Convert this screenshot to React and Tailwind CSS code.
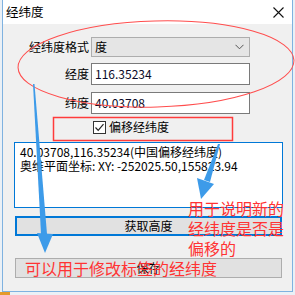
import { useState } from 'react';

const FONT = "font-['Noto_Sans_CJK_SC','Noto_Sans',sans-serif]";

function Field({ label, children }) {
    return (
        <div className="flex items-center">
            <div className="w-[88px] pr-[2px] text-right text-[12px] leading-none text-black">{label}</div>
            {children}
        </div>
    );
}

export default function App() {
    const [offset, setOffset] = useState(true);

    return (
        <div className={`relative w-[295px] h-[295px] overflow-hidden bg-[#eaf0f6] ${FONT}`}>
            {/* Window */}
            <div className="ml-[2px] w-[291px] h-[292px] flex flex-col border-x border-b border-[#7fb2e0] bg-[#f0f0f0]">
                {/* Title bar */}
                <div className="h-[24px] bg-white flex items-center justify-between pl-[3px] pr-[8px]">
                    <span className="text-[12.5px] leading-none text-black">经纬度</span>
                    <svg width="11" height="11" viewBox="0 0 11 11">
                        <path d="M0.5 0.5 L10.5 10.5 M10.5 0.5 L0.5 10.5" stroke="#111" strokeWidth="1.1" fill="none" />
                    </svg>
                </div>

                {/* Body */}
                <div className="flex-1 flex flex-col pt-[13px]">
                    <Field label="经纬度格式">
                        <div className="w-[159px] h-[20px] border border-[#adadad] bg-[#e5e5e5] flex items-center justify-between pl-[3px] pr-[5px]">
                            <span className="text-[12px] leading-none text-black">度</span>
                            <svg width="9" height="6" viewBox="0 0 9 6">
                                <path d="M0.5 0.8 L4.5 4.8 L8.5 0.8" stroke="#555" strokeWidth="1" fill="none" />
                            </svg>
                        </div>
                    </Field>
                    <div className="mt-[6px]">
                        <Field label="经度">
                            <div className="w-[159px] h-[22px] border border-[#7a7a7a] bg-white flex items-center pl-[3px]">
                                <span className="text-[12px] leading-none text-[#0a0a28]">116.35234</span>
                            </div>
                        </Field>
                    </div>
                    <div className="mt-[7px]">
                        <Field label="纬度">
                            <div className="w-[159px] h-[22px] border border-[#7a7a7a] bg-white flex items-center pl-[3px]">
                                <span className="text-[12px] leading-none text-[#0a0a28]">40.03708</span>
                            </div>
                        </Field>
                    </div>

                    {/* Checkbox */}
                    <label className="mt-[6px] h-[14px] flex items-center pl-[90px] gap-[3px] cursor-pointer" onClick={() => setOffset(!offset)}>
                        <span className="w-[13px] h-[13px] border border-[#333] bg-white flex items-center justify-center">
                            {offset && (
                                <svg width="11" height="11" viewBox="0 0 11 11">
                                    <path d="M1.5 5.5 L4.2 8.3 L9.5 2.2" stroke="#222" strokeWidth="1.2" fill="none" />
                                </svg>
                            )}
                        </span>
                        <span className="text-[12px] leading-none text-black">偏移经纬度</span>
                    </label>

                    {/* Result box */}
                    <div className="mt-[8px] ml-[11px] w-[269px] h-[66px] border border-[#0078d7] bg-white pl-[5px] pt-[2px] text-[12px] leading-[14px] text-black">
                        <div>40.03708,116.35234(中国偏移经纬度)</div>
                        <div>奥维平面坐标: XY: -252025.50,155823.94</div>
                    </div>

                    <button className="mt-[8px] ml-[12px] w-[267px] h-[20px] border-2 border-[#0078d7] bg-[#e1e1e1] flex items-center justify-center text-[12px] leading-none text-black">
                        获取高度
                    </button>
                    <button className="mt-[22px] ml-[12px] w-[267px] h-[20px] border border-[#adadad] bg-[#e1e1e1] flex items-center justify-center text-[12px] leading-none text-black">
                        保存
                    </button>
                </div>
            </div>

            {/* Desktop bits behind window */}
            <div className="absolute left-0 bottom-0 w-[10px] h-[3px] bg-[#e49a2c]" />

            {/* Annotations */}
            <svg className="absolute inset-0 pointer-events-none" width="295" height="295" viewBox="0 0 295 295">
                <ellipse cx="156" cy="64" rx="138" ry="43" transform="rotate(-1.5 156 64)" stroke="#ff4d4d" strokeWidth="1" fill="none" />
                <rect x="53.5" y="117.5" width="179" height="23" stroke="#ff3b3b" strokeWidth="1.5" fill="none" />
                <polygon points="33,84 34.5,84 47,234 41,234" fill="#3d9be9" />
                <polygon points="37,233 53,234 45,253" fill="#3d9be9" />
                <polygon points="218,144 220,144 210,182 204,180" fill="#3d9be9" />
                <polygon points="197,178 214,184 201,199" fill="#3d9be9" />
            </svg>
            <div className="absolute left-[188px] top-[198px] text-[16px] leading-[20px] text-[#ff3333] pointer-events-none">
                <div>用于说明新的</div>
                <div>经纬度是否是</div>
                <div>偏移的</div>
            </div>
            <div className="absolute left-[25px] top-[259px] text-[16px] leading-[18px] text-[#ff3333] pointer-events-none">
                可以用于修改标签的经纬度
            </div>
        </div>
    );
}
